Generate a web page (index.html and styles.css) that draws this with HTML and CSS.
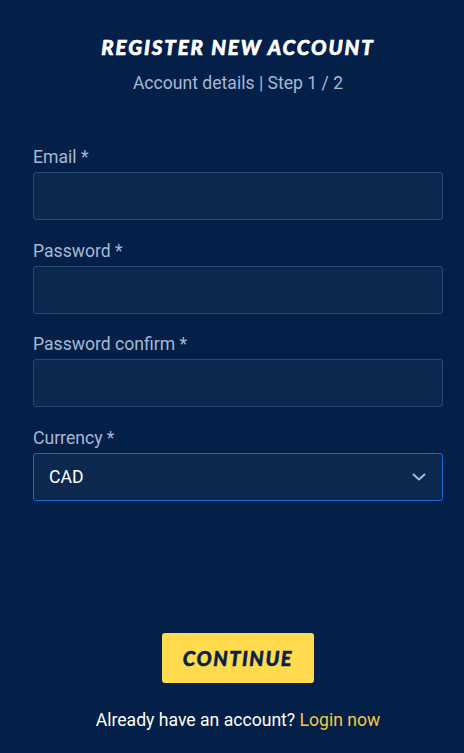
FILE: index.html
```html
<!DOCTYPE html>
<html>
<head>
<meta charset="utf-8">
<link rel="stylesheet" href="styles.css">
</head>
<body>
<div class="page">
  <header class="head">
    <h1 class="title">REGISTER NEW ACCOUNT</h1>
    <p class="sub">Account details | Step 1 / 2</p>
  </header>
  <form class="form">
    <div class="field">
      <label class="label">Email *</label>
      <div class="input"></div>
    </div>
    <div class="field">
      <label class="label">Password *</label>
      <div class="input"></div>
    </div>
    <div class="field">
      <label class="label">Password confirm *</label>
      <div class="input"></div>
    </div>
    <div class="field">
      <label class="label">Currency *</label>
      <div class="input select">
        <span class="value">CAD</span>
        <svg class="chev" width="14" height="8" viewBox="0 0 14 8"><path d="M1.5 1.5 L7 6.5 L12.5 1.5" fill="none" stroke="#a9bad6" stroke-width="2" stroke-linecap="round" stroke-linejoin="round"/></svg>
      </div>
    </div>
  </form>
  <div class="actions">
    <button class="btn" type="button">CONTINUE</button>
    <p class="login">Already have an account? <a class="link">Login now</a></p>
  </div>
</div>
</body>
</html>
```
FILE: styles.css
```css
html, body {
  margin: 0;
  padding: 0;
  background: #042048;
  height: 100%;
}
.page {
  width: 464px;
  height: 753px;
  box-sizing: border-box;
  padding: 36px 21px 0 33px;
  display: flex;
  flex-direction: column;
  font-family: Roboto, "Liberation Sans", sans-serif;
}
.head {
  text-align: center;
}
.title {
  margin: 0;
  font-family: Lato, "Open Sans", sans-serif;
  font-weight: 900;
  font-style: italic;
  font-size: 20.5px;
  line-height: 22px;
  letter-spacing: 1.9px;
  -webkit-text-stroke: 0.6px #ffffff;
  color: #ffffff;
}
.sub {
  margin: 14px 0 0;
  font-size: 17.6px;
  line-height: 22px;
  color: #a7b8d4;
}
.form {
  margin-top: 52px;
  display: flex;
  flex-direction: column;
  gap: 19.5px;
}
.field {
  display: flex;
  flex-direction: column;
}
.label {
  font-size: 17.6px;
  line-height: 22px;
  color: #a7b8d4;
  margin-bottom: 4px;
}
.input {
  height: 48px;
  box-sizing: border-box;
  border: 1px solid #2a4874;
  border-radius: 3px;
  background: #0c284f;
}
.select {
  border-color: #1a69cf;
  display: flex;
  align-items: center;
  justify-content: space-between;
  padding: 0 16px 0 15px;
}
.value {
  color: #ffffff;
  font-size: 17.6px;
}
.actions {
  margin-top: 132.5px;
  display: flex;
  flex-direction: column;
  align-items: center;
}
.btn {
  width: 152px;
  height: 50px;
  border: none;
  border-radius: 3px;
  background: #ffdb4d;
  color: #0a1f45;
  font-family: Lato, "Open Sans", sans-serif;
  font-weight: 900;
  font-style: italic;
  font-size: 20px;
  letter-spacing: 1.6px;
  -webkit-text-stroke: 0.5px #0a1f45;
  padding: 0;
}
.login {
  margin: 26px 0 0;
  font-size: 17.6px;
  line-height: 22px;
  color: #ffffff;
}
.link {
  color: #f5c842;
}
```
